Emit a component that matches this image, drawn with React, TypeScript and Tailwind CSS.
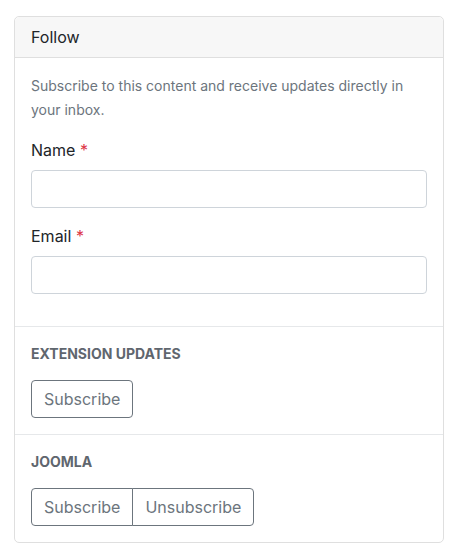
import React from "react";

export default function App() {
  return (
    <div className="min-h-screen bg-white pl-[14px] pt-4" style={{ fontFamily: "Inter, 'Noto Sans', sans-serif" }}>
      <div className="w-[430px] rounded-[5px] border border-[#dfdfdf] bg-white">
        <div className="border-b border-[#dfdfdf] bg-[#f7f7f7] px-4 py-2 text-[16px] leading-6 text-[#212529] rounded-t-[5px]">
          Follow
        </div>
        <div className="px-4 pt-4 pb-8">
          <p className="mb-4 text-[14px] leading-6 text-[#6c757d]">
            Subscribe to this content and receive updates directly in your inbox.
          </p>
          <div className="mb-4">
            <label className="mb-2 block text-[16px] leading-6 text-[#212529]">
              Name <span className="text-[#dc3545]">*</span>
            </label>
            <input type="text" className="block h-[38px] w-full rounded-[4px] border border-[#ced4da] bg-white px-3 outline-none" />
          </div>
          <div>
            <label className="mb-2 block text-[16px] leading-6 text-[#212529]">
              Email <span className="text-[#dc3545]">*</span>
            </label>
            <input type="email" className="block h-[38px] w-full rounded-[4px] border border-[#ced4da] bg-white px-3 outline-none" />
          </div>
        </div>
        <div className="border-t border-[#e6e8ea] px-4 pt-[16px] pb-4">
          <div className="mb-4 text-[14px] font-bold uppercase leading-[21px] text-[#5f666e]">Extension Updates</div>
          <button className="h-[38px] rounded-[4px] border border-[#6c757d] bg-white px-3 text-[16px] text-[#6c757d]">
            Subscribe
          </button>
        </div>
        <div className="border-t border-[#e6e8ea] px-4 pt-[16px] pb-4">
          <div className="mb-4 text-[14px] font-bold uppercase leading-[21px] text-[#5f666e]">Joomla</div>
          <div className="inline-flex">
            <button className="h-[38px] rounded-l-[4px] border border-[#6c757d] bg-white px-3 text-[16px] text-[#6c757d]">
              Subscribe
            </button>
            <button className="-ml-px h-[38px] rounded-r-[4px] border border-[#6c757d] bg-white px-3 text-[16px] text-[#6c757d]">
              Unsubscribe
            </button>
          </div>
        </div>
      </div>
    </div>
  );
}
